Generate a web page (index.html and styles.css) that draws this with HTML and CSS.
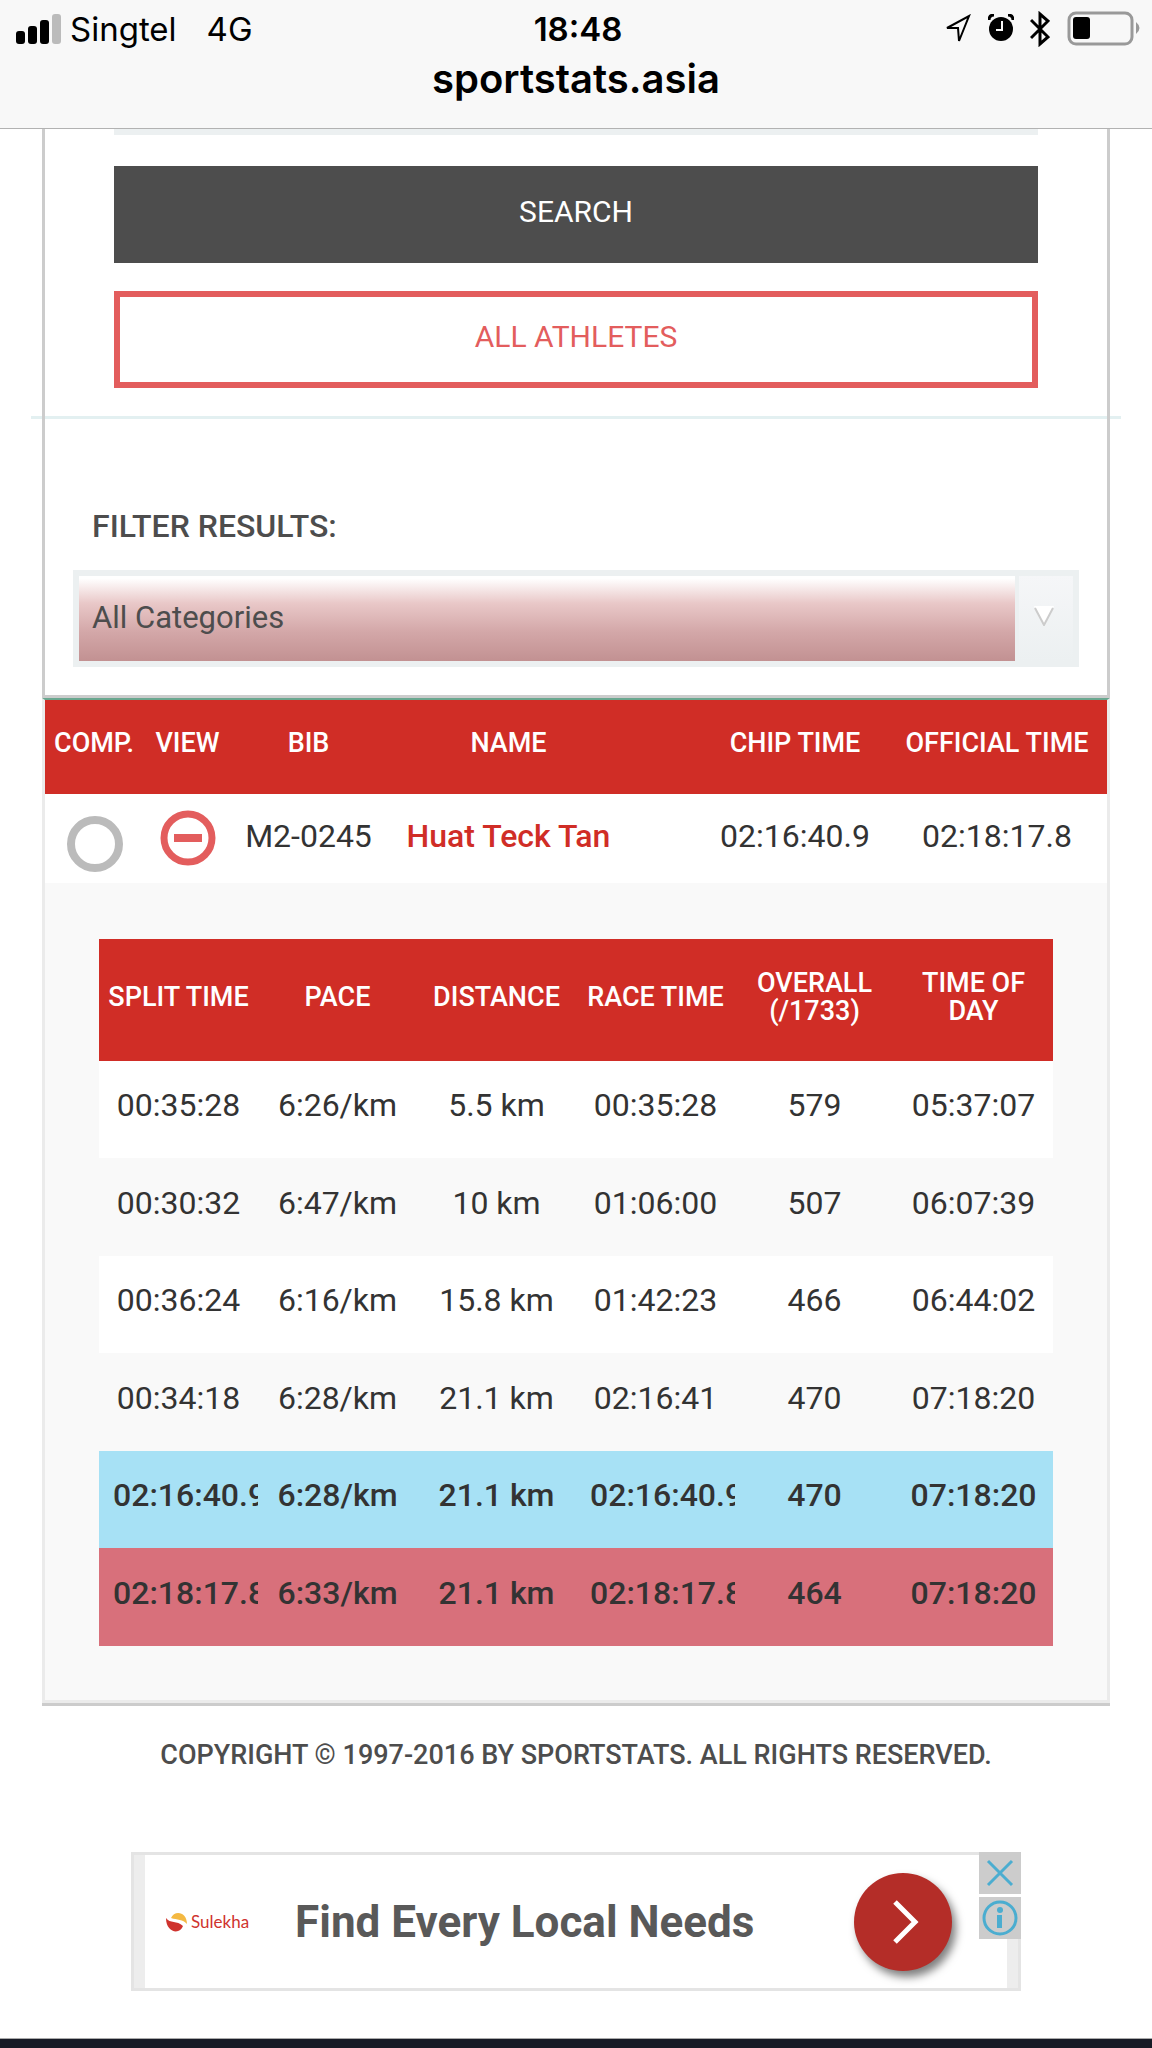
FILE: index.html
```html
<!DOCTYPE html>
<html lang="en">
<head>
<meta charset="utf-8">
<meta name="viewport" content="width=device-width, initial-scale=1">
<title>Sportstats Asia - Results</title>
<link rel="stylesheet" href="styles.css">
</head>
<body>
<header class="topbar">
  <div class="status">
    <div class="status-left">
      <svg class="signal" width="46" height="32" viewBox="0 0 46 32" aria-hidden="true">
        <rect x="0" y="18" width="9" height="13" rx="3"/>
        <rect x="12" y="13" width="9" height="18" rx="3"/>
        <rect x="24" y="7" width="9" height="24" rx="3"/>
        <rect x="36" y="1" width="9" height="30" rx="3" fill="#bbb"/>
      </svg>
      <span class="carrier">Singtel</span>
      <span>4G</span>
    </div>
    <div class="clock">18:48</div>
    <div class="status-right">
      <svg width="28" height="30" viewBox="0 0 28 30" aria-hidden="true"><path d="M3 14 L25 2 L15 27 L14 14 Z" fill="none" stroke="#000" stroke-width="2"/></svg>
      <svg width="26" height="30" viewBox="0 0 26 30" aria-hidden="true"><circle cx="13" cy="15" r="12"/><path d="M1 6 Q1 1 6 1 M25 6 Q25 1 20 1" fill="none" stroke="#000" stroke-width="3"/><path d="M14 7 V16 H8" fill="none" stroke="#f8f8f8" stroke-width="2"/></svg>
      <svg width="20" height="36" viewBox="0 0 20 36" aria-hidden="true"><path d="M1 9 L18 26 L10 33 V3 L18 10 L1 27" fill="none" stroke="#000" stroke-width="3"/></svg>
      <svg width="74" height="36" viewBox="0 0 74 36" aria-hidden="true"><rect x="3" y="2" width="63" height="31" rx="7" fill="none" stroke="#999" stroke-width="3"/><rect x="7" y="6" width="17" height="22" rx="3"/><path d="M70 11 Q77 17 70 23 Z" fill="#999"/></svg>
    </div>
  </div>
  <div class="address">sportstats.asia</div>
</header>

<main class="page">
  <section class="panel">
    <form class="search-form">
      <input class="field" type="text" aria-label="Athlete name">
      <button class="btn btn-dark" type="submit">SEARCH</button>
      <button class="btn btn-outline" type="button">ALL ATHLETES</button>
    </form>
    <hr class="rule">
    <div class="filter">
      <label class="filter-label" for="category">FILTER RESULTS:</label>
      <div class="select-box">
        <select class="select" id="category"><option>All Categories</option></select>
        <span class="select-arrow">
          <svg width="20" height="20" viewBox="0 0 20 20" aria-hidden="true"><path d="M0 0 H20 L10 19 Z" fill="#fff"/><path d="M1 2 L10 19 L19 2" fill="none" stroke="#ccc" stroke-width="2"/></svg>
        </span>
      </div>
    </div>
  </section>

  <section class="results">
    <table class="athletes">
      <colgroup><col class="c-comp"><col class="c-view"><col class="c-bib"><col><col class="c-chip"><col class="c-official"></colgroup>
      <thead>
        <tr><th>COMP.</th><th>VIEW</th><th>BIB</th><th class="name">NAME</th><th>CHIP TIME</th><th>OFFICIAL TIME</th></tr>
      </thead>
      <tbody>
        <tr>
          <td class="comp"><input class="compare" type="checkbox" aria-label="Compare Huat Teck Tan"></td>
          <td class="view"><button class="collapse" type="button" aria-label="Hide splits"><svg width="56" height="56" viewBox="0 0 56 56" aria-hidden="true"><circle cx="28" cy="28" r="24" fill="none" stroke="#e35d5d" stroke-width="7"/><rect x="14" y="24" width="28" height="8" fill="#e35d5d"/></svg></button></td>
          <td>M2-0245</td>
          <td class="name"><a class="athlete" href="#athlete">Huat Teck Tan</a></td>
          <td>02:16:40.9</td>
          <td>02:18:17.8</td>
        </tr>
      </tbody>
    </table>
    <div class="splits-wrap">
      <table class="splits">
        <thead>
          <tr><th>SPLIT TIME</th><th>PACE</th><th>DISTANCE</th><th>RACE TIME</th><th>OVERALL<br>(/1733)</th><th>TIME OF<br>DAY</th></tr>
        </thead>
        <tbody>
          <tr><td>00:35:28</td><td>6:26/km</td><td>5.5 km</td><td>00:35:28</td><td>579</td><td>05:37:07</td></tr>
          <tr><td>00:30:32</td><td>6:47/km</td><td>10 km</td><td>01:06:00</td><td>507</td><td>06:07:39</td></tr>
          <tr><td>00:36:24</td><td>6:16/km</td><td>15.8 km</td><td>01:42:23</td><td>466</td><td>06:44:02</td></tr>
          <tr><td>00:34:18</td><td>6:28/km</td><td>21.1 km</td><td>02:16:41</td><td>470</td><td>07:18:20</td></tr>
          <tr class="total chip"><td>02:16:40.9</td><td>6:28/km</td><td>21.1 km</td><td>02:16:40.9</td><td>470</td><td>07:18:20</td></tr>
          <tr class="total official"><td>02:18:17.8</td><td>6:33/km</td><td>21.1 km</td><td>02:18:17.8</td><td>464</td><td>07:18:20</td></tr>
        </tbody>
      </table>
    </div>
  </section>

  <p class="copyright">COPYRIGHT © 1997-2016 BY SPORTSTATS. ALL RIGHTS RESERVED.</p>

  <aside class="ad">
    <div class="ad-body">
      <div class="brand">
        <svg width="22" height="22" viewBox="0 0 22 22" aria-hidden="true"><path d="M5 7 C8 -1 21 0 21 13 C17 8 11 9 5 7 Z" fill="#f4b942"/><path d="M0 7 C4 13 11 9 17 15 C14 24 0 22 0 7 Z" fill="#cf332e"/></svg>
        <span>Sulekha</span>
      </div>
      <div class="ad-title">Find Every Local Needs</div>
      <a class="ad-go" href="#offer" aria-label="Open offer"><svg width="98" height="98" viewBox="0 0 98 98" aria-hidden="true"><path d="M41 29 L61 49 L41 69" fill="none" stroke="#fff" stroke-width="5"/></svg></a>
    </div>
    <div class="ad-tools">
      <button class="ad-tool" type="button" aria-label="Close ad"><svg width="42" height="42" viewBox="0 0 42 42" aria-hidden="true"><path d="M9 9 L33 33 M33 9 L9 33" stroke="#4badd0" stroke-width="3"/></svg></button>
      <button class="ad-tool" type="button" aria-label="Ad info"><svg width="42" height="42" viewBox="0 0 42 42" aria-hidden="true"><circle cx="21" cy="21" r="16" fill="none" stroke="#4badd0" stroke-width="3"/><circle cx="21" cy="13" r="3" fill="#4badd0"/><rect x="18" y="18" width="5" height="13" fill="#4badd0"/></svg></button>
    </div>
  </aside>
</main>
<footer class="site-footer"></footer>
</body>
</html>
```

FILE: styles.css
```css
* { box-sizing: border-box; }

body {
  margin: 0;
  background: #fff;
  color: #333;
  font-family: Roboto, "Liberation Sans", sans-serif;
  font-size: 32px;
  line-height: 40px;
}

button, input, select { font: inherit; margin: 0; }
button { padding: 0; border: 0; cursor: pointer; }
svg { display: block; }

/* Browser bar */
.topbar {
  position: sticky;
  top: 0;
  z-index: 1;
  height: 129px;
  padding-top: 9px;
  background: #f8f8f8;
  border-bottom: 1px solid #b2b2b2;
  color: #000;
  font-family: Inter, "Liberation Sans", sans-serif;
}
.status {
  display: grid;
  grid-template-columns: 1fr auto 1fr;
  align-items: center;
  padding: 0 12px 0 16px;
  font-size: 33px;
}
.status-left, .status-right { display: flex; align-items: center; }
.signal { margin-right: 8px; }
.carrier { margin-right: 30px; }
.clock { font-weight: 600; }
.status-right { justify-content: flex-end; gap: 16px; }
.address {
  margin-top: 10px;
  text-align: center;
  font-size: 40px;
  font-weight: 600;
}

.page { padding: 0 42px; }

/* Search and filter */
.panel {
  display: flex;
  flex-direction: column;
  border: solid #ccc;
  border-width: 0 3px 3px;
}
.search-form {
  display: flex;
  flex-direction: column;
  gap: 28px;
  padding: 0 69px 28px;
}
.field {
  width: 100%;
  height: 97px;
  margin: -91px 0 3px;
  border: 6px solid #ecf0f1;
  background: #fff;
}
.btn {
  height: 97px;
  padding-bottom: 6px;
  font-size: 30px;
}
.btn-dark { background: #4d4d4d; color: #fff; }
.btn-outline {
  background: #fff;
  border: 6px solid #e35d5d;
  color: #e35d5d;
}
.rule {
  position: relative;
  z-index: -1;
  height: 3px;
  margin: 0 -14px;
  border: 0;
  background: #e3f0f1;
}
.filter { padding: 87px 28px 28px; }
.filter-label {
  display: block;
  margin: 0 0 24px 19px;
  color: #4d4d4d;
  font-size: 32px;
  font-weight: 500;
}
.select-box {
  display: flex;
  gap: 4px;
  border: 6px solid #ecf0f1;
  background: #ecf0f1;
}
.select {
  flex: 1;
  height: 85px;
  padding: 0 13px 2px;
  appearance: none;
  border: 0;
  border-radius: 0;
  background: linear-gradient(#fff 3%, #e9c8c8 32%, #d3a7a8 66%, #c29192);
  color: #4d4d4d;
  font-size: 31px;
}
.select-arrow {
  display: flex;
  align-items: center;
  justify-content: center;
  width: 54px;
  padding: 0 5px 5px 0;
  background: linear-gradient(#f5f6f8, #ecf0f1);
}

/* Results */
.results {
  border: solid #ebebeb;
  border-width: 0 3px 3px;
  border-top: 2px solid #6aa78f;
  box-shadow: 0 3px 0 #ccc;
}
table {
  width: 100%;
  border-collapse: collapse;
  table-layout: fixed;
}
th, td { padding: 0; text-align: center; white-space: nowrap; }
th {
  background: #d02d26;
  color: #fff;
  font-size: 27px;
  font-weight: 500;
  line-height: 28px;
}
.c-comp { width: 98px; }
.c-view { width: 89px; }
.c-bib { width: 153px; }
.c-chip { width: 184px; }
.c-official { width: 220px; }
.athletes th { height: 94px; padding-bottom: 9px; }
.athletes td { height: 89px; padding-bottom: 6px; }
.athletes .name { padding-right: 71px; }
.athletes .comp { padding: 11px 0 0 22px; }
.athletes .view { padding: 0 0 1px 17px; }
.compare {
  display: block;
  width: 56px;
  height: 56px;
  appearance: none;
  border: 8px solid #bbb;
  border-radius: 50%;
}
.collapse { display: block; background: none; }
.athlete {
  color: #d02d26;
  font-weight: 500;
  text-decoration: none;
}
.splits-wrap {
  padding: 56px 54px 54px;
  background: #f9f9f9;
}
.splits th { height: 122px; padding-bottom: 6px; }
.splits td {
  height: 97px;
  padding: 0 14px 9px;
  overflow: hidden;
}
.splits tbody tr:nth-child(odd) { background: #fff; }
.splits tbody tr:nth-child(even) td { height: 98px; }
.splits .total { font-weight: 500; }
.splits tbody tr.chip { background: #a7e1f5; }
.splits tbody tr.official { background: #d8707b; }

.copyright {
  margin: 32px 0 77px;
  color: #4d4d4d;
  text-align: center;
  font-size: 27px;
  font-weight: 500;
}

/* Advertisement */
.ad {
  position: relative;
  margin: 0 89px 47px;
  padding: 0 11px;
  border: 3px solid #e4e4e4;
  background: #ededed;
}
.ad-body {
  display: flex;
  align-items: center;
  height: 133px;
  padding: 0 55px 0 21px;
  background: #fff;
}
.brand {
  display: flex;
  align-items: center;
  gap: 3px;
  color: #cf332e;
  font-family: Lato, "Noto Sans", sans-serif;
  font-size: 17px;
}
.ad-title {
  margin-left: 46px;
  color: #595959;
  font-size: 44px;
  font-weight: 700;
}
.ad-go {
  margin-left: auto;
  border-radius: 50%;
  background: #b42d28;
  box-shadow: 4px 6px 9px rgba(0, 0, 0, 0.5);
}
.ad-tools {
  position: absolute;
  top: -3px;
  right: -3px;
  display: grid;
  gap: 3px;
  background: #fff;
}
.ad-tool { background: #ccc; }

.site-footer {
  height: 10px;
  border-top: 1px solid #aaa;
  background: #171b26;
}
```
